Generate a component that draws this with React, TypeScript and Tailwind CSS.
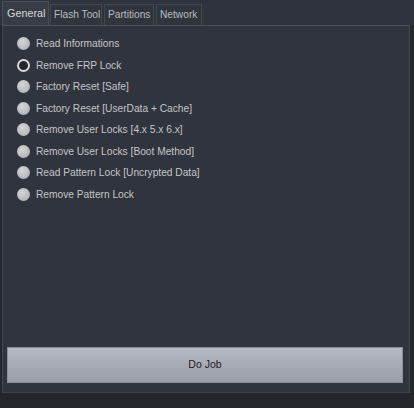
import React from "react";

const items = [
  "Read Informations",
  "Remove FRP Lock",
  "Factory Reset [Safe]",
  "Factory Reset [UserData + Cache]",
  "Remove User Locks [4.x 5.x 6.x]",
  "Remove User Locks [Boot Method]",
  "Read Pattern Lock [Uncrypted Data]",
  "Remove Pattern Lock",
];

export default function App() {
  return (
    <div
      className="w-[414px] h-[408px] bg-[#24272c] flex flex-col text-[10.2px] text-[#c4c6ca] overflow-hidden"
      style={{ fontFamily: "Tahoma, 'Liberation Sans', Arial, sans-serif" }}
    >
      <div className="flex h-[25px] items-end pl-[2px] bg-[#2f333b] shrink-0">
        <div className="h-[24px] w-[47px] pl-[4px] mr-[1px] flex items-center bg-[#383c44] border border-b-0 border-[#4a4e56] text-[#d6d8dc] text-[10.8px]">
          General
        </div>
        <div className="h-[21px] w-[52px] pl-[3px] mr-[2px] flex items-center bg-[#30343b] border border-b-0 border-[#43474f] text-[#b9bcc2]">
          Flash Tool
        </div>
        <div className="h-[21px] w-[50px] pl-[3px] mr-[2px] flex items-center bg-[#30343b] border border-b-0 border-[#43474f] text-[#b9bcc2]">
          Partitions
        </div>
        <div className="h-[21px] w-[46px] pl-[3px] flex items-center bg-[#30343b] border border-b-0 border-[#43474f] text-[#b9bcc2]">
          Network
        </div>
      </div>
      <div className="h-[368px] w-[408px] ml-[2px] bg-[#30343c] border-t border-t-[#4c5058] border-x border-x-[#43474e] border-b border-b-[#3d4148] flex flex-col shrink-0">
        <div className="flex flex-col pt-[8px] pl-[14px] gap-[2px]">
          {items.map((t, i) => (
            <div key={t} className="flex items-center h-[19.5px] gap-[4px]">
              {i === 1 ? (
                <span className="w-[13px] h-[13px] rounded-full border-[2.5px] border-[#d8dadd] bg-[#23262b] shrink-0" />
              ) : (
                <span className="w-[13px] h-[13px] rounded-full bg-[radial-gradient(circle_at_40%_35%,#d4d6d9,#a6a9ae)] shrink-0" />
              )}
              <span className="ml-[2px]">{t}</span>
            </div>
          ))}
        </div>
        <div className="flex-1" />
        <div className="px-[4px] pb-[9px]">
          <button className="w-[396px] h-[36px] bg-gradient-to-b from-[#b5b9c2] to-[#9a9ea7] border border-[#8b8f98] text-[#1e2024] text-[10.5px] flex items-center justify-center">
            Do Job
          </button>
        </div>
      </div>
      <div className="flex-1 bg-[#23262b]" />
    </div>
  );
}
